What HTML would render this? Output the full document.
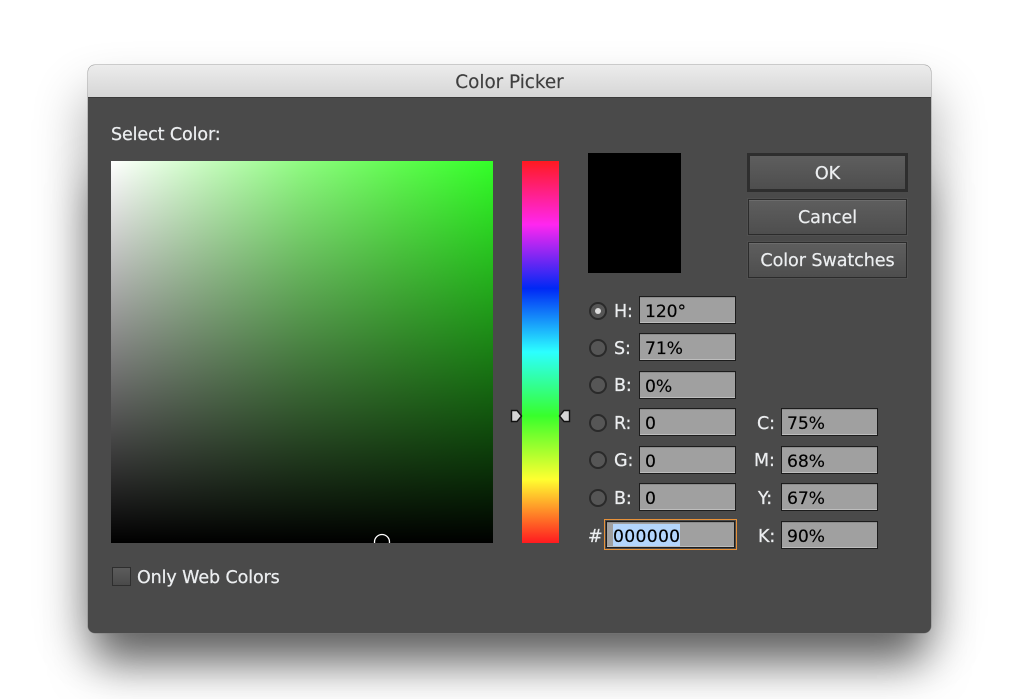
<!DOCTYPE html>
<html><head><meta charset="utf-8"><style>
html,body{margin:0;padding:0;width:1024px;height:699px;overflow:hidden;background:#fff}
body{position:relative;font-family:"DejaVu Sans","Liberation Sans",sans-serif}
.a{position:absolute}
.shadow{left:96px;top:150px;width:827px;height:482px;border-radius:6px;box-shadow:0 32px 44px 0 rgba(0,0,0,.5)}
.shadow2{left:88px;top:90px;width:843px;height:542px;border-radius:6px;box-shadow:0 8px 50px 4px rgba(0,0,0,.3)}
.win{left:88px;top:65px;width:843px;height:568px;background:#4a4a4a;border-radius:7px;overflow:hidden;box-shadow:0 0 0 .5px rgba(120,120,120,.7)}
.tb{left:0;top:0;width:843px;height:32px;background:linear-gradient(#ececec,#d6d6d6);border-bottom:1px solid #3a3a3a}
.t{white-space:nowrap;line-height:20px}
.title{left:0;width:843px;top:8px;text-align:center;color:#3f3f3f;font-size:18.4px;letter-spacing:-.02px;-webkit-text-stroke:.15px #3f3f3f}
.lbl{color:#eceef0;font-size:17.5px;letter-spacing:-.1px;-webkit-text-stroke:.25px #eceef0}
.sq{left:111px;top:161px;width:382px;height:382px;background:linear-gradient(rgba(0,0,0,0),#000),linear-gradient(90deg,#fff,#c6fcbe 25%,#8efc80 50%,#60fc50 75%,#33ff28);overflow:hidden}
.hue{left:522px;top:161px;width:37px;height:382px;background:linear-gradient(#ff1a20 0%,#ff26f0 16.67%,#0028f5 33.33%,#2cffff 50%,#38ff2c 66.67%,#ffff30 83.33%,#ff1a20 100%)}
.prev{left:588px;top:153px;width:93px;height:120px;background:#000}
.btn{left:748px;width:159px;height:36px;box-sizing:border-box;border:1px solid #2b2b2b;background:linear-gradient(#5e5e5e,#4e4e4e);box-shadow:inset 0 1px 0 #6c6c6c,0 0 0 1px #505050;color:#eceef0;font-size:17.6px;text-align:center;line-height:36px;letter-spacing:-.1px;-webkit-text-stroke:.2px #eceef0}
.f{width:97px;height:28px;box-sizing:border-box;background:#a0a0a0;border:1px solid #1c1c1c;box-shadow:inset 0 1px 0 #8c8c8c,inset 0 -1px 0 #bdbdbd;color:#000;font-size:17.2px;line-height:31px;padding-left:5px;letter-spacing:-.1px;-webkit-text-stroke:.15px #000;overflow:hidden}
.r{left:589px;width:18px;height:18px;box-sizing:border-box;border-radius:50%;border:2px solid #2a2a2a;background:#565656}
</style></head><body>
<div class="a shadow2"></div>
<div class="a shadow"></div>
<div class="a win"><div class="a tb"></div><div class="a t title">Color Picker</div></div>

<div class="a t lbl" style="left:111px;top:125px">Select Color:</div>
<div class="a sq"><svg class="a" style="left:262px;top:372px" width="20" height="10"><circle cx="9" cy="9" r="7.5" fill="none" stroke="#fff" stroke-width="1.3"/></svg></div>
<div class="a hue"></div>
<svg class="a" style="left:509px;top:408px" width="14" height="16"><path d="M2.5 2.5H8L12.5 8 8 13.5H2.5Z" fill="#d4d4d4" stroke="#111" stroke-width="1.4"/></svg>
<svg class="a" style="left:558px;top:408px" width="14" height="16"><path d="M11.5 2.5H6L1.5 8 6 13.5H11.5Z" fill="#d4d4d4" stroke="#111" stroke-width="1.4"/></svg>
<div class="a prev"></div>

<div class="a btn" style="top:153px;height:39px;left:747px;width:161px;border:3px solid #2e2e2e;line-height:36px;box-shadow:none;">OK</div>
<div class="a btn" style="top:199px">Cancel</div>
<div class="a btn" style="top:242px">Color Swatches</div>

<div class="a r" style="top:302px"></div><div class="a" style="left:595px;top:308px;width:6px;height:6px;border-radius:50%;background:#ddd"></div>
<div class="a r" style="top:339px"></div>
<div class="a r" style="top:376px"></div>
<div class="a r" style="top:414px"></div>
<div class="a r" style="top:451px"></div>
<div class="a r" style="top:489px"></div>

<div class="a t lbl" style="left:614px;top:302px">H:</div>
<div class="a t lbl" style="left:614px;top:339px">S:</div>
<div class="a t lbl" style="left:614px;top:376px">B:</div>
<div class="a t lbl" style="left:614px;top:414px">R:</div>
<div class="a t lbl" style="left:614px;top:451px">G:</div>
<div class="a t lbl" style="left:614px;top:489px">B:</div>
<div class="a t lbl" style="left:588px;top:527px">#</div>

<div class="a f t" style="left:639px;top:296px">120°</div>
<div class="a f t" style="left:639px;top:333px">71%</div>
<div class="a f t" style="left:639px;top:371px">0%</div>
<div class="a f t" style="left:639px;top:408px">0</div>
<div class="a f t" style="left:639px;top:446px">0</div>
<div class="a f t" style="left:639px;top:483px">0</div>
<div class="a" style="left:604px;top:519px;width:133px;height:31px;box-sizing:border-box;border:1.5px solid #e8923a"></div>
<div class="a f" style="left:606px;top:521px;width:129px;height:27px;padding-left:6px;white-space:nowrap;line-height:27px"><span style="background:#b4d6fd;display:inline-block;height:22px;line-height:26px;margin-top:2px;vertical-align:top;letter-spacing:.3px">000000</span></div>

<div class="a t lbl" style="left:757px;top:414px">C:</div>
<div class="a t lbl" style="left:754px;top:451px">M:</div>
<div class="a t lbl" style="left:758px;top:489px">Y:</div>
<div class="a t lbl" style="left:758px;top:527px">K:</div>
<div class="a f t" style="left:781px;top:408px">75%</div>
<div class="a f t" style="left:781px;top:446px">68%</div>
<div class="a f t" style="left:781px;top:483px">67%</div>
<div class="a f t" style="left:781px;top:521px">90%</div>

<div class="a" style="left:112px;top:567px;width:19px;height:19px;box-sizing:border-box;border:1px solid #2e2e2e;background:linear-gradient(#5c5c5c,#4a4a4a)"></div>
<div class="a t lbl" style="left:137px;top:568px">Only Web Colors</div>
</body></html>
